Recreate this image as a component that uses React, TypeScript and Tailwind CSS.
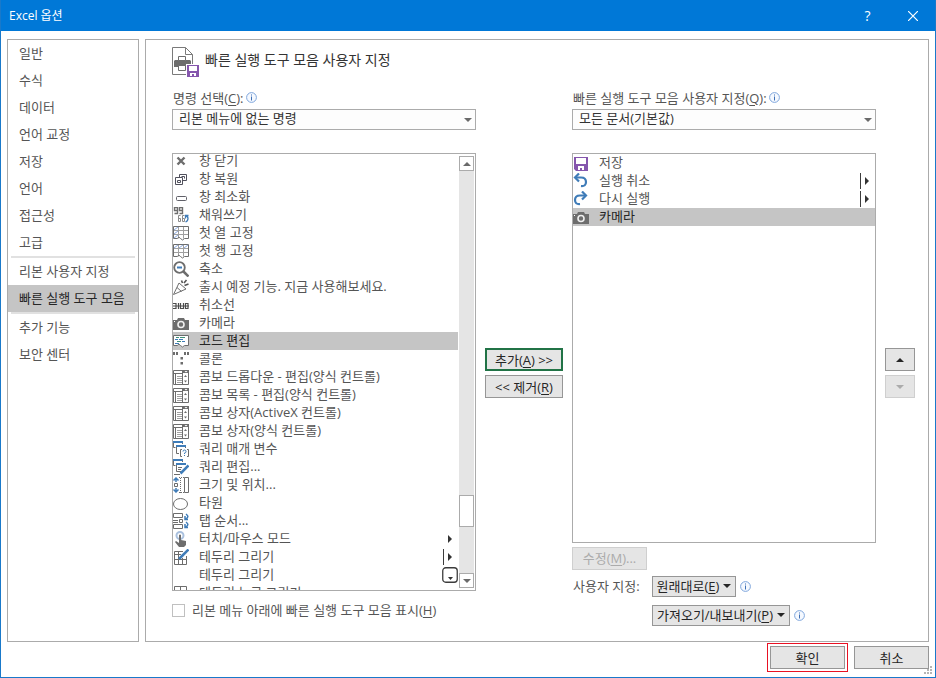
import React from "react";

type IconName =
  | "close" | "restore" | "minimize" | "refill" | "freezeCol" | "freezeRow" | "zoomOut"
  | "coming" | "strike" | "camera" | "code" | "colon" | "combo" | "queryParam" | "queryEdit"
  | "sizePos" | "oval" | "tabOrder" | "touch" | "drawBorder" | "borderGrid" | "none"
  | "save" | "undo" | "redo";

const G = "#6d6d6d";
const B = "#3f7cb8";

function glyph(name: IconName): React.ReactNode {
  switch (name) {
    case "close":
      return <path d="M4.5 4.500l7 7M11.500 4.500l-7 7" stroke={G} strokeWidth="2.400" />;
    case "restore":
      return (
        <g stroke="#50505c" fill="#fff">
          <path d="M6.500 3.500h7v6h-7z" />
          <path d="M2.500 6.500h7v7h-7z" />
          <path d="M4.500 9.500h3v2h-3zM8.500 5.500h3v2" fill="none" />
        </g>
      );
    case "minimize":
      return <rect x="3.500" y="7.500" width="10" height="4" rx="1" stroke="#606068" fill="none" />;
    case "refill":
      return (
        <g stroke={G} fill="none">
          <path d="M4.500 3.500h-3v-3h3v6h-3M9.500 3.500h-3v-3h3v6h-3" strokeWidth="1.400" />
          <path d="M7.500 8.500h-2v6h2v-3h-2M11.500 8.500h-2v6h2v-3h-2" stroke="#8a8a8a" />
          <path d="M12.500 9q2.500 0 2.500 2.500T12.500 15M15.500 8.500h-3v3" stroke={B} strokeWidth="1.300" />
        </g>
      );
    case "freezeCol":
    case "freezeRow":
      return (
        <g stroke={G} fill="none">
          <path d="M.5 5.500h15M.5 9.500h15M5.500 1.500v12M10.500 1.500v12" stroke="#a0a0a0" />
          <path d="M.5 1.500h15v12h-4q-2 3-4 0t-3 0h-4z" />
          <path
            d={name === "freezeCol" ? "M1 5l4-3M1 9l4-3M1 13l4-3" : "M1 5l4-3M6 5l4-3M11 5l4-3"}
            stroke="#8aa7dd"
          />
        </g>
      );
    case "zoomOut":
      return (
        <g fill="none">
          <circle cx="6.500" cy="6.500" r="5.300" stroke={G} strokeWidth="1.800" />
          <path d="M10.500 10.500l5 5" stroke={G} strokeWidth="2.500" />
          <path d="M4 6.500h5" stroke={B} strokeWidth="2" />
        </g>
      );
    case "coming":
      return (
        <g stroke={G} fill="none">
          <path d="M.5 15.500L6 4l7 6zM4 8.500l4.500 4" />
          <path d="M8.500 1.500l1 2.500M11 4l2.500-3M11.500 6.500l4-1.500" stroke="#555" strokeWidth="1.600" />
        </g>
      );
    case "strike":
      return (
        <g stroke="#4c4c4c" fill="none">
          <path d="M0 9h16" />
          <path d="M0 6.500h3v5H0M5.500 6v6M7.500 6v5.500h3V6M15 6.500h-2.500v5H15z" strokeWidth="1.200" />
        </g>
      );
    case "camera":
      return (
        <g>
          <path d="M0 5h4l1-2h6l1 2h4v10H0z" fill={G} />
          <circle cx="8" cy="9.500" r="3" fill="none" stroke="#f0f0f0" strokeWidth="1.600" />
          <path d="M1 6h1v1H1z" fill="#fff" />
        </g>
      );
    case "code":
      return (
        <g fill="none">
          <path d="M.5 2.500h15v10h-4q-2 3-4 0t-3 0h-4z" stroke={G} fill="#fff" />
          <path d="M3 4.500h3M7 4.500h5M4 8.500h4" stroke="#3f8f76" />
          <path d="M2 6.500h3M6 6.500h4M9 8.500h3M2 10.500h4" stroke={B} />
        </g>
      );
    case "colon":
      return (
        <g fill={G}>
          <path d="M0 1h2v3H0zM3 1h2v3H3zM11 1h2v3h-2zM14 1h2v3h-2z" />
          <path d="M7.500 6h2.500v2.500H7.500zM7.500 11h2.500v2.500H7.500z" />
        </g>
      );
    case "combo":
      return (
        <g fill="none" stroke={G}>
          <path d="M.5 1.500h15v14H.5zM9.500 1.500v14M.5 4.500h9M2.500 4.500v11" />
          <path d="M4 7.500h5M4 9.500h5M4 11.500h5M4 13.500h5" stroke="#a0a0a0" />
          <path d="M10 1h6v3h-6zM11 8l1.500-2L14 8zM11 11.500l1.500 2 1.500-2z" fill={G} stroke="none" />
          <path d="M11.500 2h3l-1.500 1.500z" fill="#fff" stroke="none" />
        </g>
      );
    case "queryParam":
      return (
        <g fill="none">
          <path d="M.5 0v6.500h2M9.500 0v3M3.500 4v8.500H6M12.500 4v3" stroke={G} />
          <path d="M0 1h10M3 5h10" stroke={B} strokeWidth="2" />
          <path d="M9 8.500H7.500v7H9M14 8.500h1.500v7H14" stroke={G} />
          <path d="M10 10.500q0-1.500 1.500-1.500t1.500 1.500-1.500 1.500v1M11.500 14v1" stroke={B} />
        </g>
      );
    case "queryEdit":
      return (
        <g fill="none">
          <path d="M.5 0v6.500h2M9.500 0v3M3.500 4v8.500H8M12.500 4v2M5 8.500h4M5 10.500h3" stroke={G} />
          <path d="M0 1h10M3 5h10" stroke={B} strokeWidth="2" />
          <path d="M15.500 6.500l-6 6-2 2" stroke={B} strokeWidth="2.500" />
          <path d="M1 15.500h6" stroke={G} />
        </g>
      );
    case "sizePos":
      return (
        <g fill="none" stroke={G}>
          <path d="M11.500 .5h4v15h-4zM1.500 6.500h3v3h-3z" />
          <path d="M6 .5h5M6 15.500h5" strokeDasharray="1 1" />
          <path d="M7.500 1v15" strokeDasharray="1 1" />
          <path d="M3 1v4M.5 3.500L3 1l2.500 2.500M3 11v4M.5 12.500L3 15l2.500-2.500" stroke={B} strokeWidth="1.500" />
        </g>
      );
    case "oval":
      return <ellipse cx="7.500" cy="9" rx="7" ry="5.500" fill="none" stroke={G} />;
    case "tabOrder":
      return (
        <g fill="none" stroke={G}>
          <path d="M.5 .5h9v4h-9zM.5 11.500h9v4h-9zM0 7.500h5M0 9.500h5M6.500 6.500h3v3h-3z" />
          <path d="M13 1q4 3-.5 5M12 3v3.500h3M13 9q4 3-.5 5M12 11v3.500h3" stroke={B} strokeWidth="1.500" />
        </g>
      );
    case "touch":
      return (
        <g>
          <circle cx="7" cy="4.500" r="3.500" fill="none" stroke="#a9c0de" strokeWidth="2" />
          <path d="M6 4q1-1 2 0v5l5 1v4l-2 2H6l-4-5 1-1 3 2z" fill={G} />
        </g>
      );
    case "drawBorder":
      return (
        <g fill="none" stroke={G}>
          <path d="M13.500 7v8.500h-12v-13H10M1.500 5.500H8M1.500 10.500h12M5.500 3v12.500M9.500 9v6" />
          <path d="M15.500 .5L9 7l-3 3" stroke={B} strokeWidth="2.500" />
        </g>
      );
    case "borderGrid":
      return <path d="M1.500 1.500h12v12h-12zM7.500 1v13M1 7.500h13" fill="none" stroke={G} />;
    case "save":
      return (
        <g>
          <path d="M1 2h14v14H3l-2-2z" fill="#8556ad" />
          <path d="M3 3h10v6H3zM5 11h6v4H9v-2H7v2H5z" fill="#fff" />
        </g>
      );
    case "undo":
    case "redo":
      return (
        <g
          fill="none"
          stroke={B}
          strokeWidth="2.200"
          transform={name === "redo" ? "translate(15 0) scale(-1 1)" : undefined}
        >
          <path d="M6 .5L2 4.500l4 4" />
          <path d="M2 4.500h6q5 0 5 4.500t-5 4" />
        </g>
      );
    default:
      return null;
  }
}

function Icon({ name }: { name: IconName }) {
  return (
    <svg viewBox="0 0 16 16" className="size-4 shrink-0" aria-hidden="true">
      {glyph(name)}
    </svg>
  );
}

function Info() {
  return (
    <svg viewBox="0 0 11 11" className="size-[11px] shrink-0" aria-hidden="true">
      <circle cx="5.500" cy="5.500" r="4.900" fill="#f5f9ff" stroke="#7fa6dc" />
      <path d="M5 2.500h1v1H5zM5 4.500h1v4H5z" fill="#3d6fb5" />
    </svg>
  );
}

type Menu = "none" | "flyout" | "split" | "gallery";
type Command = { icon: IconName; text: string; menu?: Menu; selected?: boolean };

const commands: Command[] = [
  { icon: "close", text: "창 닫기" },
  { icon: "restore", text: "창 복원" },
  { icon: "minimize", text: "창 최소화" },
  { icon: "refill", text: "채워쓰기" },
  { icon: "freezeCol", text: "첫 열 고정" },
  { icon: "freezeRow", text: "첫 행 고정" },
  { icon: "zoomOut", text: "축소" },
  { icon: "coming", text: "출시 예정 기능. 지금 사용해보세요." },
  { icon: "strike", text: "취소선" },
  { icon: "camera", text: "카메라" },
  { icon: "code", text: "코드 편집", selected: true },
  { icon: "colon", text: "콜론" },
  { icon: "combo", text: "콤보 드롭다운 - 편집(양식 컨트롤)" },
  { icon: "combo", text: "콤보 목록 - 편집(양식 컨트롤)" },
  { icon: "combo", text: "콤보 상자(ActiveX 컨트롤)" },
  { icon: "combo", text: "콤보 상자(양식 컨트롤)" },
  { icon: "queryParam", text: "쿼리 매개 변수" },
  { icon: "queryEdit", text: "쿼리 편집..." },
  { icon: "sizePos", text: "크기 및 위치..." },
  { icon: "oval", text: "타원" },
  { icon: "tabOrder", text: "탭 순서..." },
  { icon: "touch", text: "터치/마우스 모드", menu: "flyout" },
  { icon: "drawBorder", text: "테두리 그리기", menu: "split" },
  { icon: "none", text: "테두리 그리기", menu: "gallery" },
  { icon: "borderGrid", text: "테두리 눈금 그리기" },
];

const toolbar: Command[] = [
  { icon: "save", text: "저장" },
  { icon: "undo", text: "실행 취소", menu: "split" },
  { icon: "redo", text: "다시 실행", menu: "split" },
  { icon: "camera", text: "카메라", selected: true },
];

function MenuMark({ menu }: { menu?: Menu }) {
  if (!menu || menu === "none") return null;
  return (
    <svg viewBox="0 0 16 18" className="h-[18px] w-4 shrink-0" aria-hidden="true">
      {menu === "gallery" ? (
        <>
          <rect x="0.750" y="1.750" width="14.500" height="14.500" rx="3" fill="#fff" stroke="#3c3c3c" strokeWidth="1.300" />
          <path d="M6 11h5l-2.500 3z" fill="#333" />
        </>
      ) : (
        <>
          {menu === "split" && <path d="M1.500 1v16" stroke="#3c3c3c" />}
          <path d="M6 5l4 4-4 4z" fill="#333" />
        </>
      )}
    </svg>
  );
}

function Row({ c }: { c: Command }) {
  return (
    <li
      role="option"
      aria-selected={!!c.selected}
      className={`flex h-[18px] items-center ${c.selected ? "bg-[#c5c5c5] text-[#262626]" : ""}`}
    >
      <Icon name={c.icon} />
      <span className="ml-2.5 flex-1 pb-0.5 whitespace-nowrap">{c.text}</span>
      <MenuMark menu={c.menu} />
    </li>
  );
}

function Triangle({ dir, color }: { dir: "up" | "down"; color: string }) {
  return (
    <svg viewBox="0 0 8 4" className="h-1 w-2 shrink-0" aria-hidden="true">
      <path d={dir === "up" ? "M0 4l4-4 4 4z" : "M0 0l4 4 4-4z"} fill={color} />
    </svg>
  );
}

function Key({ k }: { k: string }) {
  return (
    <>
      (<span className="underline underline-offset-2">{k}</span>)
    </>
  );
}

function Picker({ id, value }: { id: string; value: string }) {
  return (
    <div className="relative">
      <select
        id={id}
        className="block h-[21px] w-full appearance-none border border-[#ababab] bg-[#fdfdfd] pb-0.5 pl-1.5 leading-[17px] text-[#333]"
      >
        <option>{value}</option>
      </select>
      <span className="pointer-events-none absolute inset-y-0 right-1 flex items-center">
        <Triangle dir="down" color="#6a6a6a" />
      </span>
    </div>
  );
}

const button = "flex items-center justify-center border whitespace-nowrap";
const normal = "border-[#969696] bg-[#e5e5e5] text-[#262626]";
const disabled = "border-[#cfcfcf] bg-[#e5e5e5] text-[#ababab]";

function NavItem({ text, selected }: { text: string; selected?: boolean }) {
  return (
    <button
      className={`flex h-[27px] w-full items-center pb-0.5 pl-[11px] whitespace-nowrap ${
        selected ? "bg-[#c5c5c5] text-[#262626]" : ""
      }`}
    >
      {text}
    </button>
  );
}

function Rule() {
  return <div className="mx-[3px] h-0.5 bg-[#e1e1e1]" />;
}

export default function App() {
  return (
    <div className="flex min-h-screen flex-col border border-t-0 border-[#1979ca] bg-white font-['Open_Sans','Noto_Sans_CJK_KR',sans-serif] text-[13px] leading-[18px] text-[#555]">
      <header className="flex h-[31px] items-center bg-[#0078d7] pl-2 text-white">
        <h1 className="flex-1 text-xs">Excel 옵션</h1>
        <button aria-label="도움말" className="flex h-full w-[45px] items-center justify-center text-sm">
          ?
        </button>
        <button aria-label="닫기" className="flex h-full w-[45px] items-center justify-center">
          <svg viewBox="0 0 10 10" className="size-2.5" aria-hidden="true">
            <path d="M0 0l10 10M10 0L0 10" stroke="#fff" strokeWidth="1.200" />
          </svg>
        </button>
      </header>

      <div className="flex flex-1 gap-1.5 px-1.5 pt-2">
        <nav className="w-[132px] shrink-0 border border-[#ababab]">
          {["일반", "수식", "데이터", "언어 교정", "저장", "언어", "접근성", "고급"].map((t) => (
            <NavItem key={t} text={t} />
          ))}
          <Rule />
          <NavItem text="리본 사용자 지정" />
          <NavItem text="빠른 실행 도구 모음" selected />
          <Rule />
          <NavItem text="추가 기능" />
          <NavItem text="보안 센터" />
        </nav>

        <main className="flex-1 border border-[#ababab] pt-1.5 pr-3 pb-3 pl-[26px]">
          <div className="flex h-[30px] items-start gap-1.5">
            <svg viewBox="0 0 28 31" className="-mr-px h-[31px] w-7 shrink-0" aria-hidden="true">
              <path d="M.5 1.500h13l7 7v20H.5z" fill="#fff" stroke="#7a7a7a" />
              <path d="M13.500 1.500v7h7" fill="none" stroke="#7a7a7a" />
              <path d="M2 15l1-1h15l1 1v6H2z" fill={G} />
              <path d="M6.500 10.500h7v4h-7zM6.500 19.500h7v5h-7z" fill="#fff" stroke={G} />
              <path d="M14 18h14v13H14z" fill="#fff" />
              <path d="M15 19h12v12H15z" fill="#8556ad" />
              <path d="M17 20h8v5h-8zM18 27h6v3h-2v-2h-2v2h-2z" fill="#fff" />
            </svg>
            <h2 className="pt-[5px] text-sm leading-[18px] text-[#333]">빠른 실행 도구 모음 사용자 지정</h2>
          </div>

          <div className="flex pt-3">
            <section className="w-[304px] shrink-0">
              <div className="flex h-[21px] items-center gap-0.5 pb-0.5 pl-px">
                <label htmlFor="source">
                  명령 선택
                  <Key k="C" />:
                </label>
                <Info />
              </div>
              <Picker id="source" value="리본 메뉴에 없는 명령" />
              <div className="mt-[23px] flex h-[438px] border border-[#ababab]">
                <div className="flex-1 overflow-hidden">
                  <ul role="listbox" aria-label="명령" className="-mt-0.5">
                    {commands.map((c, i) => (
                      <Row key={i} c={c} />
                    ))}
                  </ul>
                </div>
                <div className="mx-px my-0.5 flex w-[15px] flex-col bg-[#e5e5e5]">
                  <button aria-label="위로 스크롤" className={`${button} h-[15px] border-[#ababab] bg-white`}>
                    <Triangle dir="up" color="#6a6a6a" />
                  </button>
                  <div className="flex-1" />
                  <div className="h-8 border border-[#ababab] bg-white" />
                  <div className="h-[46px]" />
                  <button aria-label="아래로 스크롤" className={`${button} h-[15px] border-[#ababab] bg-white`}>
                    <Triangle dir="down" color="#6a6a6a" />
                  </button>
                </div>
              </div>
              <label className="mt-2.5 flex items-center gap-[7px]">
                <input type="checkbox" className="size-[13px] appearance-none border border-[#c0c0c0] bg-white" />
                <span>
                  리본 메뉴 아래에 빠른 실행 도구 모음 표시
                  <Key k="H" />
                </span>
              </label>
            </section>

            <div className="mx-[9px] flex w-[78px] shrink-0 flex-col gap-1 pt-[260px]">
              <button className="flex h-[23px] items-center justify-center border-2 border-[#217346] bg-[#e5e5e5] whitespace-nowrap text-[#262626]">
                <span>
                  추가
                  <Key k="A" /> &gt;&gt;
                </span>
              </button>
              <button className={`${button} ${normal} h-[23px]`}>
                <span>
                  &lt;&lt; 제거
                  <Key k="R" />
                </span>
              </button>
            </div>

            <section className="w-[304px] shrink-0">
              <div className="flex h-[21px] items-center gap-0.5 pb-0.5 pl-px">
                <label htmlFor="target">
                  빠른 실행 도구 모음 사용자 지정
                  <Key k="Q" />:
                </label>
                <Info />
              </div>
              <Picker id="target" value="모든 문서(기본값)" />
              <ul
                role="listbox"
                aria-label="빠른 실행 도구 모음"
                className="mt-[23px] h-[390px] border border-[#ababab]"
              >
                {toolbar.map((c) => (
                  <Row key={c.text} c={c} />
                ))}
              </ul>
              <button disabled className={`${button} ${disabled} mt-1 h-[23px] w-[75px] pb-0.5`}>
                <span>
                  수정
                  <Key k="M" />...
                </span>
              </button>
              <div className="mt-1.5 flex">
                <span className="w-20 pt-px pl-px">사용자 지정:</span>
                <div className="flex flex-col gap-2">
                  <div className="flex items-center gap-1">
                    <button className={`${button} ${normal} h-[21px] w-[84px] gap-1 pb-0.5`}>
                      <span>
                        원래대로
                        <Key k="E" />
                      </span>
                      <Triangle dir="down" color="#262626" />
                    </button>
                    <Info />
                  </div>
                  <div className="flex items-center gap-1">
                    <button className={`${button} ${normal} h-[21px] w-[138px] gap-1 pb-0.5`}>
                      <span>
                        가져오기/내보내기
                        <Key k="P" />
                      </span>
                      <Triangle dir="down" color="#262626" />
                    </button>
                    <Info />
                  </div>
                </div>
              </div>
            </section>

            <div className="ml-[9px] flex w-[30px] shrink-0 flex-col gap-1 pt-[260px]">
              <button aria-label="위로 이동" className={`${button} ${normal} h-[23px]`}>
                <Triangle dir="up" color="#262626" />
              </button>
              <button aria-label="아래로 이동" disabled className={`${button} ${disabled} h-[23px]`}>
                <Triangle dir="down" color="#ababab" />
              </button>
            </div>
          </div>
        </main>
      </div>

      <footer className="relative flex h-[35px] items-center justify-end gap-1.5 pr-1.5 pb-1">
        <div className="-mr-[3px] border border-[#e81123] p-0.5">
          <button className={`${button} ${normal} h-[23px] w-[75px]`}>확인</button>
        </div>
        <div className="p-[3px] pr-0">
          <button className={`${button} ${normal} h-[23px] w-[75px]`}>취소</button>
        </div>
        <svg viewBox="0 0 9 9" className="absolute right-0.5 bottom-0.5 size-[9px]" aria-hidden="true">
          <path d="M6 0h2v2H6zM3 3h2v2H3zM6 3h2v2H6zM0 6h2v2H0zM3 6h2v2H3zM6 6h2v2H6z" fill="#b5b5b5" />
        </svg>
      </footer>
    </div>
  );
}
